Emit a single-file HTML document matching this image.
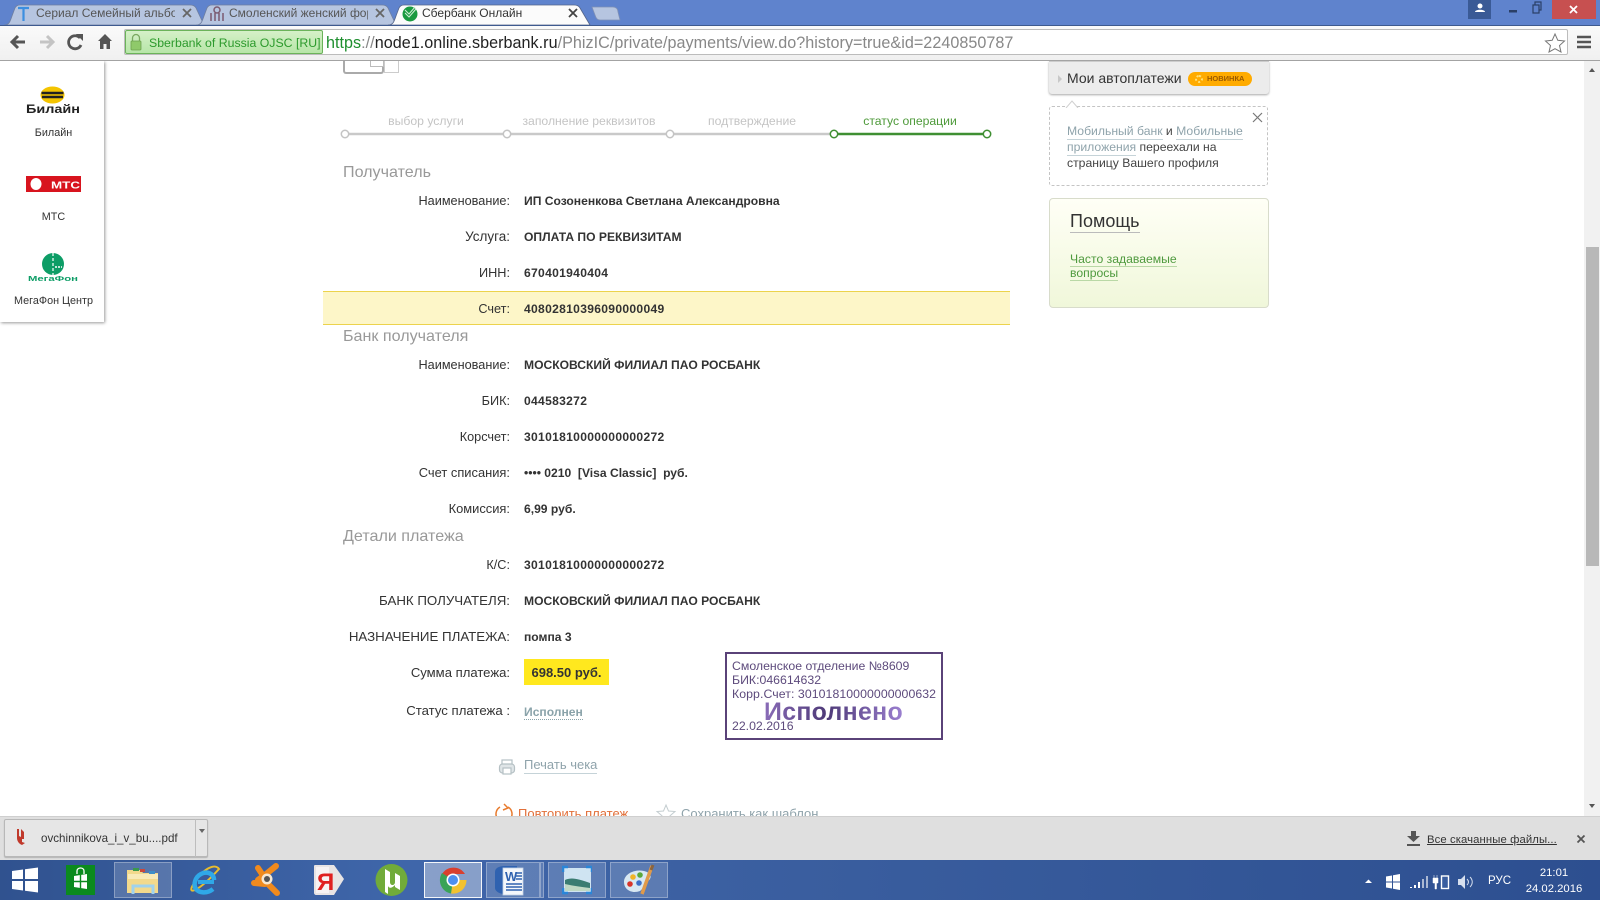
<!DOCTYPE html>
<html lang="ru"><head><meta charset="utf-8"><title>Сбербанк Онлайн</title>
<style>
html,body{margin:0;padding:0;width:1600px;height:900px;overflow:hidden;background:#fff;font-family:"Liberation Sans",sans-serif;color:#333}
.a{position:absolute}
.t{position:absolute;white-space:nowrap;line-height:20px;height:20px}
.l{position:absolute;left:324px;width:186px;text-align:right;font-size:12.7px;line-height:20px;color:#333;white-space:nowrap}
.c{font-size:13.2px}
.v{position:absolute;left:524px;font-size:12.1px;font-weight:bold;line-height:20px;color:#333;white-space:nowrap}
.d{letter-spacing:.3px}
.h{position:absolute;left:343px;font-size:16.1px;line-height:20px;color:#999;white-space:nowrap}
.s{position:absolute;font-size:12.2px;line-height:16px;width:160px;text-align:center;color:#c4c4c4;white-space:nowrap}
.g{position:absolute;font-size:10.8px;line-height:14px;color:#333;width:107px;left:0;text-align:center;white-space:nowrap}
.u{border-bottom:1px solid #c5d3d8;color:#8fa3ab}
.tab{font-size:12px;color:#555}
.st{font-size:12.3px;color:#5d4a7c}
.box{position:absolute;top:862px;height:36px;background:rgba(255,255,255,.17);border:1px solid rgba(255,255,255,.3);box-sizing:border-box}
</style></head><body>

<!-- title bar -->
<div class="a" style="left:0;top:0;width:1600px;height:25px;background:#5f83cd"></div>
<svg class="a" style="left:0;top:0" width="640" height="26">
<path d="M4 25 C9 25 10 22 12 16 L15 8 C16 6 18 5 20 5 L190 5 C193 5 195 6 196 8 L204 25Z" fill="#b6c5e0" stroke="#6f7f9f" stroke-width=".8"/>
<path d="M196 25 C201 25 202 22 204 16 L207 8 C208 6 210 5 212 5 L382 5 C385 5 387 6 388 8 L396 25Z" fill="#b6c5e0" stroke="#6f7f9f" stroke-width=".8"/>
<path d="M388 25 C393 25 394 22 396 16 L399 8 C400 6 402 5 404 5 L574 5 C577 5 579 6 580 8 L590 25Z" fill="#fbfbfb" stroke="#55658a" stroke-width=".8"/>
<path d="M592 7 L613 7 C616 7 618 9 618 12 L620 20 L600 20 C597 20 596 18 595 15Z" fill="#b6c5e0" stroke="#7f90b5" stroke-width=".8"/>
<path d="M18 8H29M23.500 8V21" stroke="#3c8fe0" stroke-width="2.200" fill="none"/>
<g stroke="#7a5a70" stroke-width="1.500" fill="none"><circle cx="217" cy="10" r="3"/><path d="M211 21V13M215 21V13M219 21V13M223 21V13"/></g>
<circle cx="410" cy="14" r="7.500" fill="#1a9a40"/>
<path d="M405 13L409 17L416 9M405 10L409 14L415 7" stroke="#cfeed4" stroke-width="1" fill="none"/>
</svg>
<div class="t tab" style="left:36px;top:3px;width:139px;overflow:hidden">Сериал Семейный альбом</div>
<div class="t tab" style="left:229px;top:3px;width:139px;overflow:hidden">Смоленский женский форум</div>
<div class="t tab" style="left:422px;top:3px;color:#333">Сбербанк Онлайн</div>
<svg class="a" style="left:0;top:0" width="590" height="25"><g stroke="#666" stroke-width="1.800"><path d="M183 9L191 17M191 9L183 17"/><path d="M376 9L384 17M384 9L376 17"/><path d="M569 9L577 17M577 9L569 17" stroke="#444"/></g></svg>
<!-- window controls -->
<div class="a" style="left:1468px;top:0;width:23px;height:19px;background:#3a5a96"></div>
<svg class="a" style="left:1468px;top:0" width="132" height="22">
<circle cx="12" cy="6" r="2.500" fill="#fff"/><path d="M7 12C7 9 17 9 17 12Z" fill="#fff"/>
<rect x="41" y="10" width="8" height="2.500" fill="#2a3f66"/>
<rect x="67" y="2" width="6" height="8" fill="none" stroke="#2a3f66" stroke-width="1.200"/><rect x="65" y="5" width="6" height="8" fill="#5f83cd" stroke="#2a3f66" stroke-width="1.200"/>
<rect x="84" y="0" width="44" height="19" fill="#c75050"/>
<path d="M102 6L109 13M109 6L102 13" stroke="#fff" stroke-width="1.800"/>
</svg>

<!-- toolbar -->
<div class="a" style="left:0;top:25px;width:1600px;height:35px;background:linear-gradient(#fafafa,#f0f0f0);border-top:1px solid #3e5a8f;box-sizing:border-box"></div>
<div class="a" style="left:0;top:60px;width:1600px;height:1px;background:#a3a3a3"></div>
<svg class="a" style="left:0;top:26px" width="122" height="34">
<path d="M25 16H14M18 10L12 16L18 22" stroke="#555" stroke-width="3" fill="none"/>
<path d="M40 16H51M47 10L53 16L47 22" stroke="#c4c4c4" stroke-width="3" fill="none"/>
<path d="M80 12A6.500 6.500 0 1 0 81 19" stroke="#555" stroke-width="2.800" fill="none"/><path d="M76 8L83 8L83 15Z" fill="#555"/>
<path d="M105 8L98 15H100V23H103.500V18H106.500V23H110V15H112Z" fill="#555"/>
</svg>
<div class="a" style="left:124px;top:29px;width:1444px;height:26px;background:#fff;border:1px solid #bcbcbc;border-radius:2px;box-sizing:border-box"></div>
<div class="a" style="left:125px;top:30px;width:198px;height:24px;background:linear-gradient(#d5f0c8,#b7e6a8);border:1px solid #6bb35a;border-radius:2px;box-sizing:border-box"></div>
<svg class="a" style="left:129px;top:33px" width="14" height="18"><path d="M3.500 8V5a3.500 3.500 0 0 1 7 0v3" stroke="#7aa860" stroke-width="1.300" fill="none"/><rect x="2" y="8" width="10" height="9" rx="1" fill="#8fc96a" stroke="#6da24f" stroke-width=".8"/></svg>
<div class="t" style="left:149px;top:33px;font-size:12.3px;color:#2c9a2c">Sberbank of Russia OJSC [RU]</div>
<div class="t" style="left:326px;top:33px;font-size:16.15px;color:#888;letter-spacing:.03px"><span style="color:#1f8f2f">https</span>://<span style="color:#222">node1.online.sberbank.ru</span>/PhizIC/private/payments/view.do?history=true&amp;id=2240850787</div>
<svg class="a" style="left:1544px;top:32px" width="50" height="22">
<path d="M11 2L13.800 8.300L20.500 9L15.500 13.500L17 20L11 16.700L5 20L6.500 13.500L1.500 9L8.200 8.300Z" fill="#fff" stroke="#777" stroke-width="1"/>
<path d="M33 5H47M33 10H47M33 15H47" stroke="#555" stroke-width="2.600"/>
</svg>

<!-- page -->
<div class="a" style="left:0;top:61px;width:1584px;height:755px;overflow:hidden;background:#fff">
 <div style="position:absolute;left:0;top:-61px;width:1584px;height:900px">
  <!-- left sidebar -->
  <div class="a" style="left:0;top:61px;width:104px;height:261px;background:#fff;box-shadow:1px 1px 3px rgba(0,0,0,.4)"></div>
  <svg class="a" style="left:0;top:80px" width="104" height="210">
   <ellipse cx="52.500" cy="15" rx="12" ry="8.500" fill="#f4c400"/>
   <path d="M41.500 13H63.500M42 17H63" stroke="#222" stroke-width="2.500"/>
   <text x="53" y="33" font-family="Liberation Sans" font-size="11.5" font-weight="bold" text-anchor="middle" fill="#222" textLength="54" lengthAdjust="spacingAndGlyphs">Билайн</text>
   <rect x="26" y="96" width="55" height="16" fill="#d8141e"/>
   <ellipse cx="36" cy="104" rx="5.500" ry="6" fill="#fff"/>
   <text x="51" y="108.500" font-family="Liberation Sans" font-size="10.5" font-weight="bold" fill="#fff" textLength="29" lengthAdjust="spacingAndGlyphs">МТС</text>
   <circle cx="53" cy="184" r="11" fill="#0d9d66"/>
   <path d="M53 173V195" stroke="#fff" stroke-width="1.200" stroke-dasharray="3 2"/>
   <path d="M55 187H62" stroke="#fff" stroke-width="1.600" stroke-dasharray="2 1"/>
   <text x="53" y="201" font-family="Liberation Sans" font-size="7.5" font-weight="bold" text-anchor="middle" fill="#0d9d66" textLength="50" lengthAdjust="spacingAndGlyphs">МегаФон</text>
  </svg>
  <div class="g" style="top:126px">Билайн</div>
  <div class="g" style="top:210px">МТС</div>
  <div class="g" style="top:294px">МегаФон Центр</div>

  <!-- doc icon -->
  <div class="a" style="left:384px;top:60px;width:15px;height:13px;border:1px solid #ccc;border-top:0;box-sizing:border-box"></div>
  <div class="a" style="left:343px;top:58px;width:41px;height:16px;border:2px solid #aaa;border-top:0;border-radius:0 0 3px 3px;box-sizing:border-box;background:#fff"></div>
  <div class="a" style="left:370px;top:60px;width:14px;height:7px;border:1px solid #bbb;border-top:0;box-sizing:border-box;background:#fff"></div>

  <!-- steps -->
  <div class="s" style="left:346px;top:113px">выбор услуги</div>
  <div class="s" style="left:509px;top:113px">заполнение реквизитов</div>
  <div class="s" style="left:672px;top:113px">подтверждение</div>
  <div class="s" style="left:830px;top:113px;color:#4e9a3a">статус операции</div>
  <svg class="a" style="left:335px;top:124px" width="665" height="20">
   <path d="M10 10H499" stroke="#c9c9c9" stroke-width="2.500"/>
   <path d="M499 10H652" stroke="#3f8f32" stroke-width="2.500"/>
   <g fill="#fff" stroke="#c4c4c4" stroke-width="1.500"><circle cx="10" cy="10" r="3.700"/><circle cx="172" cy="10" r="3.700"/><circle cx="335" cy="10" r="3.700"/></g>
   <g fill="#fff" stroke="#3f8f32" stroke-width="1.500"><circle cx="499" cy="10" r="3.700"/><circle cx="652" cy="10" r="3.700"/></g>
  </svg>

  <!-- rows -->
  <div class="h" style="top:162px">Получатель</div>
  <div class="l" style="top:191px">Наименование:</div><div class="v" style="top:191px">ИП Созоненкова Светлана Александровна</div>
  <div class="l" style="top:227px;font-size:13.5px">Услуга:</div><div class="v" style="top:227px">ОПЛАТА ПО РЕКВИЗИТАМ</div>
  <div class="l" style="top:263px">ИНН:</div><div class="v d" style="top:263px">670401940404</div>
  <div class="a" style="left:323px;top:291px;width:687px;height:34px;background:#fdf6c8;border-top:1px solid #ecd34c;border-bottom:1px solid #ecd34c;box-sizing:border-box"></div>
  <div class="l" style="top:299px">Счет:</div><div class="v d" style="top:299px">40802810396090000049</div>

  <div class="h" style="top:326px">Банк получателя</div>
  <div class="l" style="top:355px">Наименование:</div><div class="v" style="top:355px">МОСКОВСКИЙ ФИЛИАЛ ПАО РОСБАНК</div>
  <div class="l" style="top:391px">БИК:</div><div class="v d" style="top:391px">044583272</div>
  <div class="l" style="top:427px">Корсчет:</div><div class="v d" style="top:427px">30101810000000000272</div>
  <div class="l" style="top:463px;font-size:12.9px">Счет списания:</div><div class="v" style="top:463px">•••• 0210 &nbsp;[Visa Classic] &nbsp;руб.</div>
  <div class="l" style="top:499px;font-size:12.9px">Комиссия:</div><div class="v" style="top:499px">6,99 руб.</div>

  <div class="h" style="top:526px">Детали платежа</div>
  <div class="l" style="top:555px">К/С:</div><div class="v d" style="top:555px">30101810000000000272</div>
  <div class="l c" style="top:591px;font-size:13.3px">БАНК ПОЛУЧАТЕЛЯ:</div><div class="v" style="top:591px">МОСКОВСКИЙ ФИЛИАЛ ПАО РОСБАНК</div>
  <div class="l c" style="top:627px;font-size:13.3px">НАЗНАЧЕНИЕ ПЛАТЕЖА:</div><div class="v" style="top:627px">помпа 3</div>
  <div class="l" style="top:663px;font-size:13.1px">Сумма платежа:</div>
  <div class="a" style="left:524px;top:659px;width:85px;height:26px;background:#ffe81e;font-size:13px;font-weight:bold;line-height:27px;text-align:center;color:#333">698.50 руб.</div>
  <div class="l" style="top:701px;font-size:13.2px">Статус платежа :</div>
  <div class="v" style="top:703px;color:#8aa3aa;line-height:18px;height:16px;border-bottom:1px dotted #8aa3aa">Исполнен</div>

  <!-- stamp -->
  <div class="a" style="left:725px;top:652px;width:218px;height:88px;border:2px solid #5a4278;box-sizing:border-box;background:#fff"></div>
  <div class="t st" style="left:732px;top:656px">Смоленское отделение №8609</div>
  <div class="t st" style="left:732px;top:670px">БИК:046614632</div>
  <div class="t st" style="left:732px;top:684px;letter-spacing:.07px">Корр.Счет: 30101810000000000632</div>
  <div class="t" style="left:764px;top:702px;font-size:24.9px;font-weight:bold;background:linear-gradient(90deg,#8a6cb8,#4e3a78 45%,#9b7fd0);-webkit-background-clip:text;background-clip:text;color:transparent;letter-spacing:.3px">Исполнено</div>
  <div class="t st" style="left:732px;top:716px">22.02.2016</div>

  <!-- actions -->
  <svg class="a" style="left:498px;top:758px" width="18" height="18"><rect x="4" y="2" width="10" height="5" fill="none" stroke="#b5c0c4" stroke-width="1.200"/><rect x="1.500" y="6" width="15" height="9" rx="3" fill="#dfe5e7" stroke="#b5c0c4" stroke-width="1.200"/><rect x="5" y="10" width="8" height="6" fill="#fff" stroke="#b5c0c4" stroke-width="1.200"/></svg>
  <div class="t" style="left:524px;top:756px;font-size:13px;line-height:18px;height:18px"><span class="u" style="display:inline-block;height:17px">Печать чека</span></div>
  <svg class="a" style="left:492px;top:803px" width="22" height="22"><path d="M8 4A8 8 0 1 0 16 4" fill="none" stroke="#e87b2e" stroke-width="1.500"/><path d="M12 1L16 5L11 7" fill="none" stroke="#e87b2e" stroke-width="1.500"/></svg>
  <div class="t" style="left:518px;top:804px;font-size:13px;color:#e2703a">Повторить платеж</div>
  <svg class="a" style="left:655px;top:802px" width="22" height="22"><path d="M11 3L13.500 9L20 9.500L15 13.800L16.500 20L11 16.800L5.500 20L7 13.800L2 9.500L8.500 9Z" fill="none" stroke="#c4cdd0" stroke-width="1"/></svg>
  <div class="t" style="left:681px;top:804px;font-size:13px;color:#8fa3ab">Сохранить как шаблон</div>

  <!-- right col -->
  <div class="a" style="left:1049px;top:61px;width:220px;height:33px;background:#ececec;border-top:1px solid #ccc;border-radius:0 0 3px 3px;box-shadow:0 1px 2px rgba(0,0,0,.35);box-sizing:border-box"></div>
  <svg class="a" style="left:1057px;top:74px" width="6" height="10"><path d="M1 1L5 5L1 9Z" fill="#c8c8c8"/></svg>
  <div class="t" style="left:1067px;top:68px;font-size:14px;color:#333">Мои автоплатежи</div>
  <div class="a" style="left:1188px;top:72px;width:64px;height:14px;background:#ffab00;border-radius:7px"></div>
  <div class="a" style="left:1195px;top:75px;width:8px;height:8px;border-radius:50%;border:2px dotted #ffe27a;box-sizing:border-box"></div>
  <div class="t" style="left:1207px;top:69px;font-size:7.500px;color:#9b5a00;font-weight:bold">НОВИНКА</div>

  <div class="a" style="left:1049px;top:106px;width:219px;height:80px;border:1px dashed #c4c4c4;border-radius:3px;box-sizing:border-box"></div>
  <svg class="a" style="left:1065px;top:100px" width="14" height="8"><path d="M1 8L7 1L13 8" fill="#fff" stroke="#d0d0d0" stroke-width="1"/></svg>
  <svg class="a" style="left:1252px;top:112px" width="11" height="11"><path d="M1 1L10 10M10 1L1 10" stroke="#777" stroke-width="1.200"/></svg>
  <div class="t" style="left:1067px;top:121px;font-size:12.2px;color:#444"><span class="u" style="display:inline-block;height:16px;line-height:16px">Мобильный банк</span> и <span class="u" style="display:inline-block;height:16px;line-height:16px">Мобильные</span></div>
  <div class="t" style="left:1067px;top:137px;font-size:12.2px;color:#444"><span class="u" style="display:inline-block;height:16px;line-height:16px">приложения</span> переехали на</div>
  <div class="t" style="left:1067px;top:153px;font-size:12.2px;color:#444">страницу Вашего профиля</div>

  <div class="a" style="left:1049px;top:198px;width:220px;height:110px;border:1px solid #d8dccb;border-radius:4px;background:linear-gradient(#fffff6,#f0f7da);box-sizing:border-box"></div>
  <div class="t" style="left:1070px;top:211px;font-size:18px;color:#333;line-height:20px;height:20px;border-bottom:1px solid #bbb;padding-bottom:1px">Помощь</div>
  <div class="t" style="left:1070px;top:252px;font-size:12.2px;color:#4f9a3e;line-height:14px;height:14px;border-bottom:1px solid #b9d8a6">Часто задаваемые</div>
  <div class="t" style="left:1070px;top:266px;font-size:12.2px;color:#4f9a3e;line-height:14px;height:14px;border-bottom:1px solid #b9d8a6">вопросы</div>
 </div>
</div>

<!-- scrollbar -->
<div class="a" style="left:1584px;top:61px;width:16px;height:755px;background:#f1f1f1"></div>
<div class="a" style="left:1586px;top:247px;width:13px;height:319px;background:#b8b8b8"></div>
<svg class="a" style="left:1584px;top:61px" width="16" height="755"><path d="M5 11L8 7L11 11Z" fill="#555"/><path d="M5 743L8 747L11 743Z" fill="#555"/></svg>

<!-- download bar -->
<div class="a" style="left:0;top:816px;width:1600px;height:44px;background:#dfdfdf;border-top:1px solid #cfcfcf;box-sizing:border-box"></div>
<div class="a" style="left:4px;top:819px;width:204px;height:38px;background:#e6e6e6;border:1px solid #b8b8b8;border-radius:2px;box-shadow:0 1px 1px rgba(0,0,0,.2);box-sizing:border-box"></div>
<div class="a" style="left:195px;top:819px;width:1px;height:38px;background:#bdbdbd"></div>
<svg class="a" style="left:198px;top:828px" width="8" height="6"><path d="M1 1H7L4 5Z" fill="#666"/></svg>
<svg class="a" style="left:13px;top:826px" width="16" height="22"><path d="M4 3H6V10L8 11V3L11 6V13L9 13V16L12 17L9 19C6 18 4 15 4 12Z" fill="#c0392b"/></svg>
<div class="t" style="left:41px;top:829px;font-size:11.6px;color:#333">ovchinnikova_i_v_bu....pdf</div>
<svg class="a" style="left:1406px;top:830px" width="16" height="17"><path d="M5 1H10V6H14L7.500 12L1 6H5Z" fill="#555"/><rect x="1" y="14" width="13" height="2" fill="#555"/></svg>
<div class="t" style="left:1427px;top:830px;font-size:11.3px;color:#333;letter-spacing:.1px;text-decoration:underline">Все скачанные файлы...</div>
<svg class="a" style="left:1575px;top:833px" width="12" height="12"><path d="M2.500 2.500L9.500 9.500M9.500 2.500L2.500 9.500" stroke="#555" stroke-width="1.800"/></svg>

<!-- taskbar -->
<div class="a" style="left:0;top:860px;width:1600px;height:40px;background:linear-gradient(90deg,#30528f,#3f66aa 25%,#3a5e9f 50%,#2d4f90)"></div>
<svg class="a" style="left:11px;top:866px" width="28" height="28"><path d="M1 5L12 3.500V13H1ZM14 3.200L27 1.500V13H14ZM1 15H12V24.500L1 23ZM14 15H27V26.500L14 24.800Z" fill="#fff"/></svg>
<div class="a" style="left:66px;top:865px;width:29px;height:30px;background:#0b8a1e"></div>
<svg class="a" style="left:66px;top:865px" width="29" height="30"><path d="M11 9V6C11 2 18 2 18 6V9" stroke="#fff" stroke-width="1.300" fill="none"/><path d="M8 11L21 9V24L8 22Z" fill="#fff"/><path d="M14.500 10V23M8 16.500H21" stroke="#0b8a1e" stroke-width="1.400"/></svg>

<div class="box" style="left:114px;width:58px"></div>
<svg class="a" style="left:125px;top:866px" width="36" height="30">
<path d="M2 4H16L18 7H33V27H2Z" fill="#f2d98c"/><rect x="3" y="8" width="30" height="5" fill="#f8eab8"/>
<rect x="8" y="2" width="6" height="3" fill="#3b9a4c"/><rect x="15" y="3" width="5" height="3" fill="#c8483c"/><rect x="24" y="5" width="6" height="3" fill="#3e8ec8"/>
<path d="M8 28V20H28V28" fill="none" stroke="#9fd2ee" stroke-width="3"/>
</svg>
<svg class="a" style="left:187px;top:863px" width="34" height="34">
<path d="M6 22C0 32 10 30 32 6C28 0 16 5 6 22Z" fill="none" stroke="#e8bd2e" stroke-width="2"/>
<path d="M27 17C27 10 19 8 14 11C8 14 6 22 9 26C12 30 20 31 26 26" fill="none" stroke="#2fa8e8" stroke-width="4.500"/>
<path d="M11 19H27" stroke="#2fa8e8" stroke-width="4"/>
</svg>
<svg class="a" style="left:250px;top:863px" width="34" height="34">
<path d="M8 17L15 12L26 3M14 17L17 20L27 30M14 14L8 5M15 21L4 20" stroke="#f08a1d" stroke-width="6" stroke-linecap="round" fill="none"/>
<circle cx="17" cy="16" r="5.500" fill="#f7e7d0"/><circle cx="17" cy="16" r="3" fill="#555"/>
</svg>
<svg class="a" style="left:312px;top:863px" width="34" height="34"><path d="M2 3C2 2 3 2 4 2H22L32 16L22 32H4C3 32 2 31 2 30Z" fill="#e8e4e4"/><path d="M4 4H17V30H4Z" fill="#f7f3f3"/><text x="5" y="27" font-family="Liberation Sans" font-size="24" font-weight="bold" fill="#e02020">Я</text></svg>
<svg class="a" style="left:375px;top:863px" width="34" height="34"><circle cx="16.500" cy="17" r="16" fill="#71ab3a"/><path d="M10 6L15 9V19C15 23 20 23 20 19V10L25 13V27L20 24V22C16 26 14 25 13 23V31L10 29Z" fill="#fff"/></svg>

<div class="box" style="left:424px;width:58px;background:rgba(255,255,255,.38);border:1px solid rgba(255,255,255,.9)"></div>
<svg class="a" style="left:438px;top:865px" width="30" height="30">
<path d="M15 15L4 9A13.500 13.500 0 0 1 27 9H15Z" fill="#d9402f"/>
<path d="M15 15H28.500A13.500 13.500 0 0 1 13 28.500Z" fill="#f2c230"/>
<path d="M15 15L13 28.500A13.500 13.500 0 0 1 4 8Z" fill="#3aa357"/>
<circle cx="15" cy="15" r="6.500" fill="#fff"/><circle cx="15" cy="15" r="5" fill="#4d8ff0"/>
</svg>

<div class="box" style="left:486px;width:54px"></div>
<div class="box" style="left:540px;width:4px"></div>
<svg class="a" style="left:493px;top:864px" width="32" height="32">
<path d="M2 8C2 4 6 2 12 2H24V28L12 30C6 30 2 27 2 24Z" fill="#2f62b0"/>
<rect x="10" y="4" width="20" height="27" fill="#f4f7fb" stroke="#c4d3e6" stroke-width=".8"/>
<text x="12" y="17" font-family="Liberation Sans" font-size="13" font-weight="bold" fill="#2f62b0">W</text>
<path d="M23 9H29M23 12H29M23 15H29M13 20H29M13 23H29M13 26H29" stroke="#2f62b0" stroke-width="1.500"/>
</svg>

<div class="box" style="left:548px;width:58px"></div>
<svg class="a" style="left:562px;top:865px" width="30" height="30">
<rect x="2" y="3" width="27" height="24" fill="#cfe4f2"/>
<path d="M3 15C10 12 16 14 28 18V26H3Z" fill="#3a7c72"/>
<path d="M3 19C12 21 20 22 28 23V26H3Z" fill="#bfd8c4"/>
<path d="M1 7V2H6M24 2H30V7M1 23V28H6M24 28H30V23" stroke="#2a86d8" stroke-width="2.500" fill="none"/>
</svg>

<div class="box" style="left:610px;width:58px"></div>
<svg class="a" style="left:622px;top:864px" width="34" height="32">
<path d="M2 18C2 10 12 5 22 7C30 9 30 14 26 17C22 20 22 24 18 27C10 30 2 26 2 18Z" fill="#d8e8f2"/>
<circle cx="8" cy="20" r="2.800" fill="#d8352a"/><circle cx="11" cy="13" r="2.800" fill="#f0b428"/><circle cx="18" cy="11" r="2.800" fill="#5aa83c"/><circle cx="17" cy="19" r="2.800" fill="#3c6fc8"/>
<path d="M30 2L20 30" stroke="#e09a4a" stroke-width="3.500"/><path d="M31 1L29 6" stroke="#8a6540" stroke-width="3"/>
</svg>

<!-- tray -->
<svg class="a" style="left:1362px;top:874px" width="120" height="16">
<path d="M3 9L6.500 5.500L10 9Z" fill="#fff"/>
<path d="M24 2.500L30 1.500V7.500H24ZM31 1.300L38 0V7.500H31ZM24 8.500H30V14.500L24 13.500ZM31 8.500H38V16L31 14.700Z" fill="#fff"/>
<path d="M48 13h2v1h-2zM52 11h2v3h-2zM56 8h2v6h-2z" fill="#fff"/><path d="M60 5h2v9h-2zM64 2h2v12h-2z" fill="#aab8d2"/>
<path d="M72 1V4M75 1V4M71 4H76V9H74.500V15H73V9H71Z" fill="#fff" stroke="#fff" stroke-width=".5"/>
<rect x="79.500" y="2" width="7" height="12.500" fill="#3a5e9f" stroke="#fff" stroke-width="1.400"/>
<path d="M96 5H99L103 1V15L99 11H96Z" fill="#d6dfee"/><path d="M105 5C107 7 107 9 105 11M108 3C111 6 111 10 108 13" stroke="#d6dfee" stroke-width="1" fill="none"/>
</svg>
<div class="t" style="left:1488px;top:871px;font-size:11.500px;color:#fff">РУС</div>
<div class="t" style="left:1524px;top:863px;width:60px;text-align:center;font-size:11.300px;color:#fff">21:01</div>
<div class="t" style="left:1524px;top:879px;width:60px;text-align:center;font-size:11.300px;color:#fff">24.02.2016</div>
</body></html>
